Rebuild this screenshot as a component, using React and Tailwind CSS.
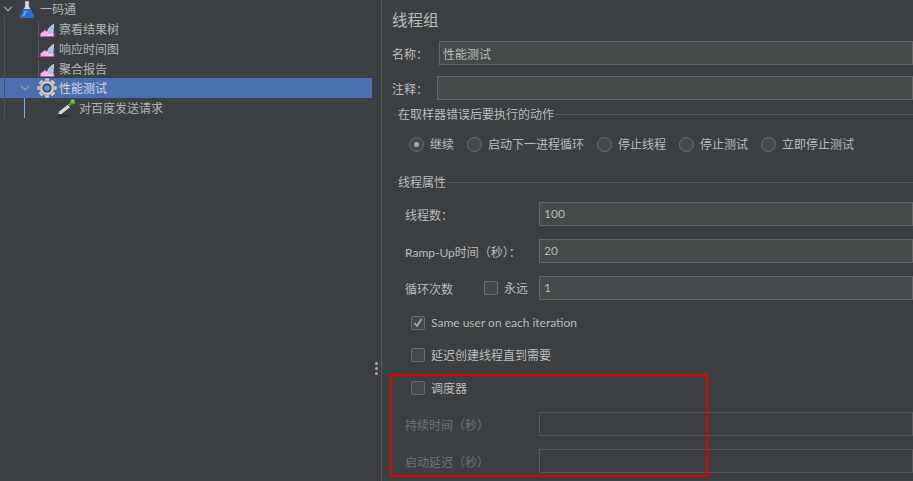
import { ChevronDown } from 'lucide-react';

function FlaskIcon() {
  return (
    <svg width="14" height="18" viewBox="0 0 14 18" className="shrink-0">
      <path d="M5 1h4v5l4.500 10q.5 1.500-1 1.500H1.500q-1.500 0-1-1.500L5 6z" fill="#d8dde2" stroke="#5d6366" strokeWidth=".6" />
      <path d="M3.500 9h7l3 7q.3 1.500-1 1.500H1.500q-1.300 0-1-1.500z" fill="#1d6fd6" />
      <path d="M5 11h2l-3 5H2.500z" fill="#7db8f2" />
    </svg>
  );
}

function GraphIcon() {
  return (
    <svg width="18" height="17" viewBox="0 0 18 17" className="shrink-0">
      <path d="M.5 0v16" stroke="#6d6f71" strokeWidth="1" strokeDasharray="1.500 1" />
      <path d="M2.500 15.500v-3l4.500-3.500 3 2.500 6 1v3z" fill="#f4b6e4" stroke="#d850b6" strokeWidth="1" />
      <path d="M15.500 3.500c-3 1.500-6 5-6 8 0 1.500 1.200 2.500 2.500 2.500s3-1 3-3z" fill="#9fc0e0" stroke="#e8eff6" strokeWidth=".8" />
    </svg>
  );
}

function GearIcon() {
  const teeth = [0, 45, 90, 135, 180, 225, 270, 315];
  return (
    <svg width="20" height="20" viewBox="0 0 20 20" className="shrink-0">
      {teeth.map((a) => (
        <rect key={a} x="8" y="0.500" width="4" height="19" rx="1" fill="#c9c9c2" transform={`rotate(${a} 10 10)`} />
      ))}
      <circle cx="10" cy="10" r="7.200" fill="#cfcfc8" stroke="#8a8a84" strokeWidth=".6" />
      <circle cx="10" cy="10" r="4.600" fill="#2c3f5c" />
      <circle cx="10" cy="10" r="3" fill="#5f93c9" />
    </svg>
  );
}

function PipetteIcon() {
  return (
    <svg width="20" height="20" viewBox="0 0 20 20" className="shrink-0">
      <ellipse cx="7" cy="18" rx="6" ry="1" fill="#2b2d2e" />
      <path d="M.5 16.500l1-3 9-7 3 3-9 7z" fill="#d4d6d4" stroke="#2e3032" strokeWidth=".9" />
      <path d="M10.500 6.500l2-1 1-3.500c1-1.500 3.500-1 4.500.5 .8 1.500 0 3-1 3.500l-3.500 1-1 2z" fill="#5f9f3f" />
      <path d="M14.500 2.500c1-.8 2-.5 2.500.3l-2 2z" fill="#9bd06f" />
    </svg>
  );
}

function TreeRow({ indent, icon, label, selected, chevron, labelGap = 'ml-[3px]' }) {
  return (
    <div className={`flex h-5 items-center ${indent} ${selected ? 'bg-[#4b6eaf] text-[#d4d8df]' : 'text-[#b3b3b3]'}`}>
      {chevron && <ChevronDown size={14} strokeWidth={2.500} className="mr-[5px] shrink-0 text-[#8f98a3]" />}
      {icon}
      <span className={`${labelGap} pt-[2px] whitespace-nowrap`}>{label}</span>
    </div>
  );
}

function Legend({ children }) {
  return (
    <div className="flex h-5 items-center">
      <div className="h-px w-[3px] bg-[#555759]" />
      <span className="px-[1px] pt-[2px] whitespace-nowrap">{children}</span>
      <div className="h-px flex-1 bg-[#555759]" />
    </div>
  );
}

function Radio({ label, checked }) {
  return (
    <div className="mr-[13px] flex items-center">
      <div className="flex h-[15px] w-[15px] items-center justify-center rounded-full border border-[#6b6b6b] bg-[#43494a]">
        {checked && <div className="h-[5px] w-[5px] rounded-full bg-[#a9a9a9]" />}
      </div>
      <span className="ml-[6px] pt-[2px] whitespace-nowrap">{label}</span>
    </div>
  );
}

function Check({ label, checked, textPad = 'pt-[2px]' }) {
  return (
    <div className="flex h-5 items-center pl-[17px]">
      <div className="flex h-[14px] w-[14px] items-center justify-center rounded-[2px] border border-[#6b6b6b] bg-[#43494a]">
        {checked && (
          <svg width="10" height="10" viewBox="0 0 10 10">
            <path d="M1.500 5l2.500 3 4.500-7" fill="none" stroke="#a9a9a9" strokeWidth="1.800" />
          </svg>
        )}
      </div>
      <span className={`ml-[6px] ${textPad} whitespace-nowrap`}>{label}</span>
    </div>
  );
}

function Field({ label, value, disabled }) {
  return (
    <div className="flex h-6 items-center">
      <span className={`w-[145px] pt-[4px] pl-[11px] whitespace-nowrap ${disabled ? 'text-[#6f7173]' : ''}`}>{label}</span>
      <div className={`flex h-6 flex-1 items-center border px-1 ${disabled ? 'border-[#555759] bg-[#3c3f41]' : 'border-[#646464] bg-[#45494a]'}`}>
        {value}
      </div>
    </div>
  );
}

export default function App() {
  return (
    <div className="relative flex h-[481px] w-[913px] overflow-hidden bg-[#3c3f41] font-['Lato','Noto_Sans_CJK_SC',sans-serif] text-[12px] text-[#bbbbbb]">
      <div className="relative w-[372px] shrink-0">
        <div className="absolute top-[18px] left-1 h-[100px] w-px bg-[#4f5254]" />
        <div className="absolute top-[98px] left-6 h-5 w-px bg-[#6cb2ea]" />
        <div className="-mt-px">
          <TreeRow indent="pl-[1px]" chevron icon={<FlaskIcon />} labelGap="ml-[6px]" label="一码通" />
          <TreeRow indent="pl-[38px]" icon={<GraphIcon />} label="察看结果树" />
          <TreeRow indent="pl-[38px]" icon={<GraphIcon />} label="响应时间图" />
          <TreeRow indent="pl-[38px]" icon={<GraphIcon />} label="聚合报告" />
        </div>
        <div className="-mt-px">
          <TreeRow indent="pl-[18px]" selected chevron icon={<GearIcon />} labelGap="ml-[2px]" label="性能测试" />
          <TreeRow indent="pl-[57px]" icon={<PipetteIcon />} labelGap="ml-[2px]" label="对百度发送请求" />
        </div>
      </div>

      <div className="relative flex w-[9px] shrink-0 items-center justify-center">
        <div className="mt-[-33px] flex translate-y-[144px] flex-col gap-[2px]">
          <div className="h-[3px] w-[3px] rounded-full bg-[#a9a9a9]" />
          <div className="h-[3px] w-[3px] rounded-full bg-[#a9a9a9]" />
          <div className="h-[3px] w-[3px] rounded-full bg-[#a9a9a9]" />
        </div>
      </div>

      <div className="flex-1 border-l border-[#555759] pl-[10px]">
        <div className="pt-[9px] text-[15.500px] leading-[22px] text-[#bbbbbb]">线程组</div>

        <div className="mt-[10px] flex h-6 items-center">
          <span className="w-[47px] pt-[4px] whitespace-nowrap">名称：</span>
          <div className="flex h-6 flex-1 items-center border border-[#646464] bg-[#45494a] px-[3px] pt-[3px]">性能测试</div>
        </div>
        <div className="mt-[11px] flex h-6 items-center">
          <span className="w-[45px] pt-[4px] whitespace-nowrap">注释：</span>
          <div className="h-6 flex-1 border border-[#646464] bg-[#45494a]" />
        </div>

        <div className="mt-1 pl-[2px]">
          <Legend>在取样器错误后要执行的动作</Legend>
          <div className="mt-[10px] flex h-5 items-center pl-[15px]">
            <Radio checked label="继续" />
            <Radio label="启动下一进程循环" />
            <Radio label="停止线程" />
            <Radio label="停止测试" />
            <Radio label="立即停止测试" />
          </div>
        </div>

        <div className="mt-[18px] pl-[2px]">
          <Legend>线程属性</Legend>
          <div className="mt-[10px] flex flex-col gap-[13px]">
            <Field label="线程数：" value="100" />
            <Field label="Ramp-Up时间（秒）：" value="20" />
            <div className="flex h-6 items-center">
              <span className="w-[90px] pt-[4px] pl-[11px] whitespace-nowrap">循环次数</span>
              <div className="h-[14px] w-[14px] rounded-[2px] border border-[#6b6b6b] bg-[#43494a]" />
              <span className="ml-[6px] w-[35px] pt-[2px] whitespace-nowrap">永远</span>
              <div className="flex h-6 flex-1 items-center border border-[#646464] bg-[#45494a] px-1">1</div>
            </div>
          </div>
          <div className="mt-[13px] flex flex-col gap-[12px]">
            <Check checked textPad="" label="Same user on each iteration" />
            <Check label="延迟创建线程直到需要" />
            <div className="pt-px">
              <Check label="调度器" />
            </div>
          </div>
          <div className="mt-[14px] flex flex-col gap-[13px]">
            <Field disabled label="持续时间（秒）" />
            <Field disabled label="启动延迟（秒）" />
          </div>
        </div>
      </div>

      <div className="absolute top-[374px] left-[390px] h-[103px] w-[318px] border-2 border-[#e60000]" />
    </div>
  );
}
